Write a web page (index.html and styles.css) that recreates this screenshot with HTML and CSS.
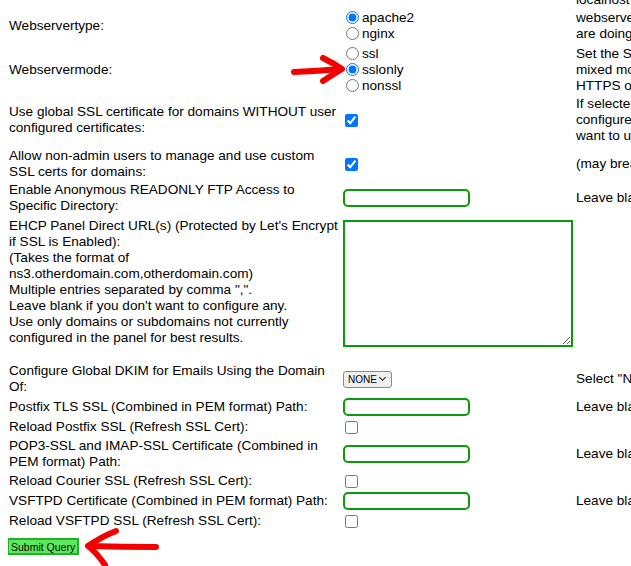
FILE: index.html
```html
<!DOCTYPE html>
<html lang="en">
<head>
    <meta charset="UTF-8">
    <meta name="viewport" content="width=device-width, initial-scale=1.0">
    <title>Panel Settings</title>
    <link rel="stylesheet" href="styles.css">
</head>
<body>
    <form class="settings-form">
        <table class="settings">
            <colgroup>
                <col class="col-label">
                <col class="col-field">
                <col class="col-help">
            </colgroup>
            <tr>
                <td>Panel Hostname or IP:</td>
                <td class="field"><input type="text" class="text-field"></td>
                <td class="help">Enter the hostname or IP address used to reach this panel.<br>It is used when building links in emails and templates (example:<br>localhost, panel.example.com or 192.168.1.10)</td>
            </tr>
            <tr>
                <td>Webservertype:</td>
                <td class="field">
                    <label class="choice"><input type="radio" name="webservertype" checked>apache2</label><br>
                    <label class="choice"><input type="radio" name="webservertype">nginx</label>
                </td>
                <td class="help">webserver to use for serving all hosted domains. Do not change this unless you<br>are doing a fresh install or know what you are doing.</td>
            </tr>
            <tr class="mode-row">
                <td>Webservermode:</td>
                <td class="field">
                    <label class="choice"><input type="radio" name="webservermode">ssl</label><br>
                    <label class="choice"><input type="radio" name="webservermode" checked>sslonly</label><br>
                    <label class="choice"><input type="radio" name="webservermode">nonssl</label>
                </td>
                <td class="help">Set the SSL mode of the webserver. ssl serves HTTP and HTTPS together in a<br>mixed mode, sslonly redirects all traffic to HTTPS and nonssl turns off<br>HTTPS on the webserver completely.</td>
            </tr>
            <tr>
                <td>Use global SSL certificate for domains WITHOUT user<br>configured certificates:</td>
                <td class="field"><input type="checkbox" class="check" checked></td>
                <td class="help">If selected, the global SSL certificate will be used for every domain that has not<br>configured its own custom certificate. Leave this unchecked if you do not<br>want to use the global certificate.</td>
            </tr>
            <tr class="gap-top">
                <td>Allow non-admin users to manage and use custom<br>SSL certs for domains:</td>
                <td class="field"><input type="checkbox" class="check" checked></td>
                <td class="help">(may break the webserver configuration if users upload invalid certificates)</td>
            </tr>
            <tr>
                <td>Enable Anonymous READONLY FTP Access to<br>Specific Directory:</td>
                <td class="field"><input type="text" class="text-field"></td>
                <td class="help">Leave blank to disable anonymous FTP access.</td>
            </tr>
            <tr class="gap-top url-row">
                <td>EHCP Panel Direct URL(s) (Protected by Let's Encrypt<br>if SSL is Enabled):<br>(Takes the format of<br>ns3.otherdomain.com,otherdomain.com)<br>Multiple entries separated by comma ",".<br>Leave blank if you don't want to configure any.<br>Use only domains or subdomains not currently<br>configured in the panel for best results.</td>
                <td class="field"><textarea class="url-box"></textarea></td>
                <td class="help"></td>
            </tr>
            <tr class="dkim-row">
                <td>Configure Global DKIM for Emails Using the Domain<br>Of:</td>
                <td class="field">
                    <span class="select-wrap">
                        <select class="dkim-select">
                            <option>NONE</option>
                        </select>
                    </span>
                </td>
                <td class="help">Select "NONE" to disable DKIM signing for all outgoing emails.</td>
            </tr>
            <tr>
                <td>Postfix TLS SSL (Combined in PEM format) Path:</td>
                <td class="field"><input type="text" class="text-field"></td>
                <td class="help">Leave blank to use the default panel certificate.</td>
            </tr>
            <tr>
                <td>Reload Postfix SSL (Refresh SSL Cert):</td>
                <td class="field"><input type="checkbox" class="check"></td>
                <td class="help"></td>
            </tr>
            <tr>
                <td>POP3-SSL and IMAP-SSL Certificate (Combined in<br>PEM format) Path:</td>
                <td class="field"><input type="text" class="text-field"></td>
                <td class="help">Leave blank to use the default panel certificate.</td>
            </tr>
            <tr>
                <td>Reload Courier SSL (Refresh SSL Cert):</td>
                <td class="field"><input type="checkbox" class="check"></td>
                <td class="help"></td>
            </tr>
            <tr>
                <td>VSFTPD Certificate (Combined in PEM format) Path:</td>
                <td class="field"><input type="text" class="text-field"></td>
                <td class="help">Leave blank to use the default panel certificate.</td>
            </tr>
            <tr>
                <td>Reload VSFTPD SSL (Refresh SSL Cert):</td>
                <td class="field"><input type="checkbox" class="check"></td>
                <td class="help"></td>
            </tr>
        </table>
        <input type="submit" class="submit-btn" value="Submit Query">
    </form>

    <!-- red hand-drawn arrows from the screenshot -->
    <svg class="marks" width="631" height="566" viewBox="0 0 631 566">
        <g fill="none" stroke="#f50000" stroke-width="6" stroke-linecap="round" stroke-linejoin="round">
            <path d="M294 72 Q318 71 341 69"/>
            <path d="M323 58 Q333 63 342 69 Q332 75 323 81"/>
            <path d="M156 547 Q122 547 89 546"/>
            <path d="M116 531 Q101 537 88 546 Q97 553 105 565"/>
        </g>
    </svg>
</body>
</html>
```

FILE: styles.css
```css
html {
    overflow: hidden;
}
body {
    margin: 0 0 0 8px;
    background-color: #fff;
    color: #000;
    font-family: "Liberation Sans", Arial, sans-serif;
    font-size: 13.6px;
    line-height: 16px;
}
.settings {
    table-layout: fixed;
    width: 623px;
    border-collapse: separate;
    border-spacing: 0 2px;
    margin-top: -42px;
}
.col-label {
    width: 333px;
}
.col-field {
    width: 233px;
}
.settings td {
    padding: 0 1px;
    height: 18px;
    vertical-align: middle;
}
.settings td.field {
    padding-left: 0;
}
.settings td.help {
    padding-left: 2px;
    padding-right: 0;
    white-space: nowrap;
    overflow: hidden;
}
.mode-row td {
    padding-top: 2px;
}
.gap-top td {
    padding-top: 2px;
}
.url-row td {
    vertical-align: top;
}
.dkim-row td {
    padding-bottom: 1px;
}
.choice input {
    width: 13px;
    height: 13px;
    margin: 0 3px 0 5px;
    vertical-align: middle;
    position: relative;
    top: -1px;
}
.check {
    width: 13px;
    height: 13px;
    margin: 0 3px 0 4px;
    vertical-align: middle;
}
.text-field {
    box-sizing: border-box;
    width: 127px;
    height: 18px;
    margin: 0 0 0 2px;
    padding: 0 4px;
    border: 2px solid #0a9a0a;
    border-radius: 5px;
    vertical-align: middle;
    font: 13px "Liberation Sans", Arial, sans-serif;
}
.text-field:focus, .url-box:focus {
    outline: none;
}
.url-box {
    display: block;
    box-sizing: border-box;
    width: 230px;
    height: 127px;
    margin: 2px 0 14px 2px;
    border: 2px solid #0a9a0a;
    border-radius: 0;
    font: 13px "Liberation Sans", Arial, sans-serif;
}
.select-wrap {
    position: relative;
    display: inline-block;
    margin-left: 2px;
    vertical-align: middle;
}
.select-wrap::after {
    content: "";
    position: absolute;
    top: 4px;
    right: 7px;
    width: 4px;
    height: 4px;
    border-right: 1.5px solid #222;
    border-bottom: 1.5px solid #222;
    transform: rotate(45deg);
    pointer-events: none;
}
.dkim-select {
    display: block;
    box-sizing: border-box;
    width: 49px;
    height: 17px;
    margin: 0;
    padding: 0 0 0 4px;
    -webkit-appearance: none;
    appearance: none;
    background-color: #efefef;
    border: 1px solid #8a8a8a;
    border-radius: 3px;
    color: #000;
    font: 10px "Liberation Sans", Arial, sans-serif;
}
.submit-btn {
    display: block;
    margin: 6px 0 0 -1px;
    height: 17px;
    padding: 0 2px;
    background-color: #5bea5b;
    border: 2px solid #25b025;
    border-radius: 0;
    color: #000;
    font: 10.5px "Liberation Sans", Arial, sans-serif;
}
.marks {
    position: absolute;
    top: 0;
    left: 0;
    pointer-events: none;
}
```
